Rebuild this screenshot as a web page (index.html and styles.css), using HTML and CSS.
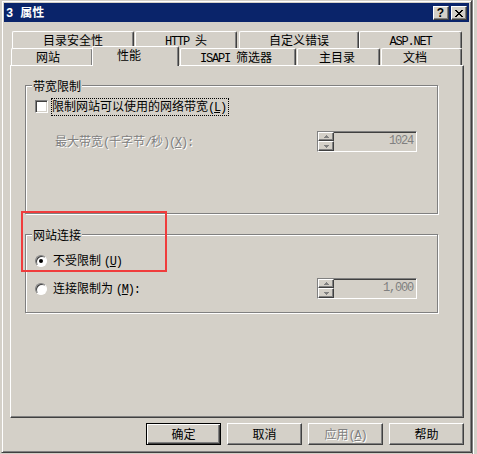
FILE: index.html
```html
<!DOCTYPE html>
<html lang="zh-CN">
<head>
<meta charset="utf-8">
<title>3 属性</title>
<link rel="stylesheet" href="styles.css">
</head>
<body>
<div class="screen">
  <div class="window">
    <div class="caption">
      <span class="title"><span class="mb">3</span><span class="tname">属性</span></span>
      <div class="cap-btns">
        <span class="cbtn help">?</span>
        <span class="cbtn">
          <svg width="8" height="7" viewBox="0 0 8 7" shape-rendering="crispEdges"><path d="M0 0h2v1H0zM6 0h2v1H6zM1 1h2v1H1zM5 1h2v1H5zM2 2h4v1H2zM3 3h2v1H3zM2 4h4v1H2zM1 5h2v1H1zM5 5h2v1H5zM0 6h2v1H0zM6 6h2v1H6z" fill="#000"/></svg>
        </span>
      </div>
    </div>
    <div class="client">
      <div class="tabrow back">
        <div class="tab b1">目录安全性</div>
        <div class="tab b2"><span class="m">HTTP </span>头</div>
        <div class="tab b3">自定义错误</div>
        <div class="tab b4"><span class="m">ASP.NET</span></div>
      </div>
      <div class="tabrow front">
        <div class="tab f1">网站</div>
        <div class="tab f2 selected">性能</div>
        <div class="tab f3"><span class="m">ISAPI </span>筛选器</div>
        <div class="tab f4">主目录</div>
        <div class="tab f5">文档</div>
      </div>
      <div class="panel">
        <div class="group g1">
          <span class="legend">带宽限制</span>
          <div class="chkrow">
            <span class="checkbox"></span>
            <span class="focuslabel">限制网站可以使用的网络带宽<span class="m">(<u>L</u>)</span></span>
          </div>
          <div class="fieldrow bw">
            <span class="disabled">最大带宽<span class="m">(</span>千字节<span class="m">/</span>秒<span class="m">)(<u>X</u>):</span></span>
            <div class="spin">
              <div class="spinbtns">
                <span class="sbtn up"><svg width="5" height="3" viewBox="0 0 5 3" shape-rendering="crispEdges"><path d="M2 0h1v1h1v1h1v1H0V2h1V1h1z" fill="#808080"/></svg></span>
                <span class="sbtn down"><svg width="5" height="3" viewBox="0 0 5 3" shape-rendering="crispEdges"><path d="M0 0h5v1H4v1H3v1H2V2H1V1H0z" fill="#808080"/></svg></span>
              </div>
              <span class="value m">1024</span>
            </div>
          </div>
        </div>
        <div class="group g2">
          <span class="legend">网站连接</span>
          <div class="radiorow first">
            <span class="radio checked"><span class="dot"></span></span>
            <span class="rlabel">不受限制 <span class="m">(<u>U</u>)</span></span>
          </div>
          <div class="radiorow second">
            <span class="radio"></span>
            <span class="rlabel">连接限制为 <span class="m">(<u>M</u>):</span></span>
            <div class="spin">
              <div class="spinbtns">
                <span class="sbtn up"><svg width="5" height="3" viewBox="0 0 5 3" shape-rendering="crispEdges"><path d="M2 0h1v1h1v1h1v1H0V2h1V1h1z" fill="#808080"/></svg></span>
                <span class="sbtn down"><svg width="5" height="3" viewBox="0 0 5 3" shape-rendering="crispEdges"><path d="M0 0h5v1H4v1H3v1H2V2H1V1H0z" fill="#808080"/></svg></span>
              </div>
              <span class="value m">1,000</span>
            </div>
          </div>
        </div>
      </div>
      <div class="buttons">
        <span class="btn default">确定</span>
        <span class="btn">取消</span>
        <span class="btn disabled">应用<span class="m">(<u>A</u>)</span></span>
        <span class="btn">帮助</span>
      </div>
    </div>
  </div>
  <div class="behind"></div>
  <div class="highlight"></div>
</div>
</body>
</html>
```
FILE: styles.css
```css
* { box-sizing: border-box; margin: 0; padding: 0; }
html, body { width: 477px; height: 454px; overflow: hidden; }
body {
  font-family: "Noto Sans CJK SC", "Liberation Sans", sans-serif;
  font-size: 12px;
  line-height: 15px;
  color: #000;
  background: #d4d0c8;
}
.m {
  font-family: "Liberation Mono", "Noto Sans CJK SC", monospace;
  font-size: 12px;
  letter-spacing: -1.2px;
}
.mb {
  font-family: "Liberation Mono", monospace;
  font-size: 12px;
  font-weight: bold;
}
.tname { margin-left: 7px; }
.screen {
  position: relative;
  display: flex;
  width: 477px;
  height: 454px;
  padding-left: 1px;
  background: #d4d0c8;
}
.window {
  width: 471px;
  height: 453px;
  display: flex;
  flex-direction: column;
  background: #d4d0c8;
  border: 1px solid;
  border-color: #d4d0c8 #404040 #404040 #d4d0c8;
  box-shadow: inset 1px 1px 0 #fff, inset -1px -1px 0 #808080;
  padding: 2px;
}
.caption {
  height: 19px;
  flex: none;
  display: flex;
  align-items: flex-start;
  background: #0a246a;
  padding: 0 2px;
}
.title {
  color: #fff;
  font-weight: bold;
  line-height: 18px;
  white-space: nowrap;
}
.cap-btns {
  margin-left: auto;
  margin-top: 3px;
  display: flex;
  gap: 2px;
}
.cbtn {
  width: 16px;
  height: 14px;
  display: flex;
  align-items: center;
  justify-content: center;
  background: #d4d0c8;
  border: 1px solid;
  border-color: #fff #404040 #404040 #fff;
  box-shadow: inset -1px -1px 0 #808080;
}
.cbtn svg { display: block; margin-left: -1px; }
.help {
  font-family: "Liberation Sans", sans-serif;
  font-weight: bold;
  font-size: 12px;
  line-height: 12px;
  padding-right: 1px;
}
.client {
  flex: 1;
  display: flex;
  flex-direction: column;
  padding-top: 9px;
}
.tabrow {
  display: flex;
  height: 17px;
  flex: none;
}
.tabrow.back { margin-left: 8px; }
.tabrow.front {
  margin-left: 7px;
  align-items: flex-end;
  position: relative;
  z-index: 1;
}
.tab {
  height: 17px;
  flex: none;
  background: #d4d0c8;
  border-top: 1px solid #fff;
  border-left: 1px solid #fff;
  border-right: 1px solid #404040;
  box-shadow: inset -1px 0 0 #808080;
  border-radius: 2px 2px 0 0;
  white-space: nowrap;
  line-height: 15px;
}
.back .tab { text-align: center; padding-top: 1px; line-height: 14px; }
.b1 { width: 122px; margin-right: 1px; }
.b2 { width: 102px; margin-right: 2px; }
.b3 { width: 120px; }
.b4 { width: 103px; }
.front .tab { padding-top: 0; }
.f1 { width: 82px; padding-left: 24px; }
.f2 { width: 87px; padding-left: 24px; margin-left: -1px; margin-right: 1px; }
.f3 { width: 116px; padding-left: 19px; margin-right: 1px; }
.f4 { width: 83px; padding-left: 21px; margin-right: 1px; }
.f5 { width: 81px; padding-left: 21px; }
.tab.selected {
  height: 20px;
  margin-bottom: -1px;
  position: relative;
  z-index: 1;
}
.panel {
  margin-left: 6px;
  width: 454px;
  height: 353px;
  flex: none;
  display: flex;
  flex-direction: column;
  border: 1px solid;
  border-color: #fff #404040 #404040 #fff;
  box-shadow: inset -1px -1px 0 #808080;
}
.group {
  margin-left: 14px;
  width: 413px;
  flex: none;
  display: flex;
  flex-direction: column;
  border: 1px solid #808080;
  box-shadow: inset 1px 1px 0 #fff, 1px 1px 0 #fff;
}
.g1 { margin-top: 19px; height: 129px; }
.g2 { margin-top: 20px; height: 79px; }
.legend {
  align-self: flex-start;
  margin: -7px 0 0 6px;
  padding: 0 1px;
  background: #d4d0c8;
  line-height: 14px;
  white-space: nowrap;
}
.chkrow {
  display: flex;
  align-items: flex-start;
  margin: 5px 0 0 9px;
}
.checkbox {
  width: 13px;
  height: 13px;
  margin-top: 2px;
  background: #fff;
  border: 1px solid;
  border-color: #808080 #fff #fff #808080;
  box-shadow: inset 1px 1px 0 #404040, inset -1px -1px 0 #d4d0c8;
}
.focuslabel {
  margin-left: 3px;
  border: 1px dotted #000;
  line-height: 14px;
  padding-right: 2px;
  white-space: nowrap;
}
.fieldrow {
  display: flex;
  align-items: center;
  justify-content: space-between;
  height: 21px;
}
.bw {
  margin-top: 15px;
  padding-left: 29px;
  padding-right: 20px;
}
.disabled {
  color: #808080;
  text-shadow: 1px 1px 0 #fff;
  white-space: nowrap;
}
.spin {
  width: 100px;
  height: 21px;
  flex: none;
  display: flex;
  background: #d4d0c8;
  border: 1px solid;
  border-color: #808080 #fff #fff #808080;
  box-shadow: inset 1px 1px 0 #404040;
}
.spinbtns {
  width: 16px;
  display: flex;
  flex-direction: column;
}
.sbtn {
  display: flex;
  align-items: center;
  justify-content: center;
  background: #d4d0c8;
  border: 1px solid;
  border-color: #fff #404040 #404040 #fff;
  box-shadow: inset -1px -1px 0 #808080;
}
.sbtn.up { height: 9px; }
.sbtn.down { height: 10px; }
.sbtn svg { display: block; }
.value {
  flex: 1;
  text-align: right;
  padding-right: 3px;
  color: #808080;
  line-height: 19px;
}
.radiorow {
  display: flex;
  align-items: center;
  margin-left: 9px;
}
.radiorow.first { margin-top: 11px; height: 15px; }
.radiorow.second { margin-top: 10px; height: 21px; padding-right: 20px; }
.radiorow.second .spin { margin-left: auto; }
.radio {
  width: 12px;
  height: 12px;
  flex: none;
  border-radius: 50%;
  background: #fff;
  border: 1px solid;
  border-color: #808080 #fff #fff #808080;
  box-shadow: inset 1px 1px 0 #404040;
  display: flex;
  align-items: center;
  justify-content: center;
}
.dot {
  width: 4px;
  height: 4px;
  border-radius: 50%;
  background: #000;
}
.rlabel {
  margin-left: 6px;
  white-space: nowrap;
  line-height: 15px;
}
.buttons {
  display: flex;
  justify-content: flex-end;
  gap: 6px;
  margin-top: 5px;
  padding-right: 5px;
}
.btn {
  width: 75px;
  height: 22px;
  text-align: center;
  line-height: 20px;
  background: #d4d0c8;
  border: 1px solid;
  border-color: #fff #404040 #404040 #fff;
  box-shadow: inset -1px -1px 0 #808080;
  white-space: nowrap;
}
.btn.default {
  border-color: #000;
  box-shadow: inset 1px 1px 0 #fff, inset -1px -1px 0 #404040, inset -2px -2px 0 #808080;
}
.btn.disabled {
  color: #808080;
  text-shadow: 1px 1px 0 #fff;
}
.behind {
  flex: 1;
  background: #d4d0c8;
  border-left: 1px solid #808080;
  box-shadow: inset 1px 0 0 #fff;
}
.highlight {
  position: absolute;
  left: 21px;
  top: 211px;
  width: 146px;
  height: 61px;
  border: 2px solid #f03c3c;
}
```
